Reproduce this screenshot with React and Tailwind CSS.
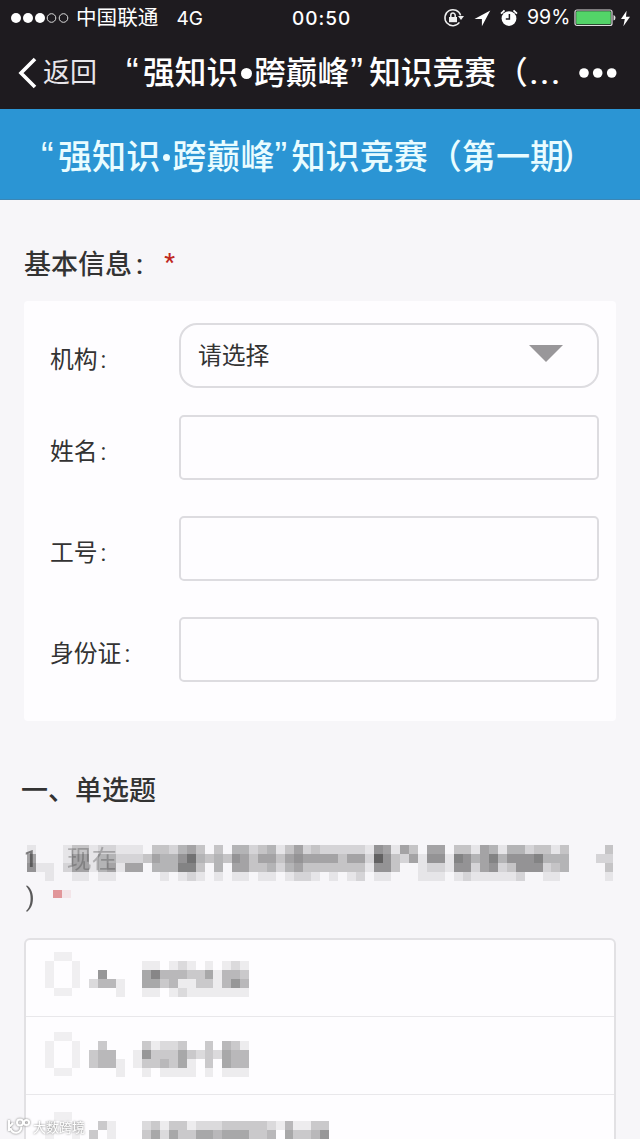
import React from 'react';
import clsx from 'clsx';

const CELL = 8.89;

// One string per column, top to bottom. 0 = empty, 9 = darkest block.
const QUESTION_COLUMNS = [
    '1560', '0010', '0011', '0000', '1120', '3551', '3551', '1110', '2441', '2451',
    '1210', '1250', '1250', '0300', '3540', '3441', '2440', '4671', '5872', '3431',
    '0300', '3441', '0300', '4651', '4551', '2330', '3531', '4541', '1320', '3541',
    '5652', '2532', '3531', '2530', '2531', '2330', '2531', '2532', '1210', '6961',
    '5661', '1330', '5200', '3500', '0111', '5621', '5621', '0110', '3761', '3662',
    '1421', '5551', '4761', '1421', '4631', '4662', '2660', '3760', '3421', '1431',
    '3440', '0000', '0000', '0000', '0200', '3231',
];

const RADIO_COLUMNS = ['01110', '10001', '10001', '01110'];

const OPTIONS = [
    {
        id: 'a',
        className: 'h-[77px] pt-[12px]',
        columns: [
            '0020', '0640', '0040', '0011', '0000', '0000', '1551', '1751', '0430',
            '1441', '2412', '1311', '0331', '1531', '0111', '1441', '2461', '1341',
        ],
    },
    {
        id: 'b',
        className: 'h-[78px] pt-[15px]',
        columns: [
            '0330', '3440', '0440', '0011', '0000', '0110', '3631', '1330', '2341',
            '2331', '3551', '0311', '0200', '3331', '0200', '4551', '3441', '1441',
        ],
    },
    {
        id: 'c',
        className: 'h-[78px] pt-[17px]',
        columns: [
            '03', '30', '11', '00', '00', '00', '23', '35', '12', '35', '33', '13', '25', '25',
            '24', '35', '35', '35', '33', '33', '24', '10', '45', '13', '13', '34', '36',
        ],
    },
];

const FIELDS = [
    { id: 'name', label: '姓名', className: 'mt-[27px]' },
    { id: 'job', label: '工号', className: 'mt-[36px]' },
    { id: 'idcard', label: '身份证', className: 'mt-[36px]' },
];

function Mosaic({ columns, color = '#222222', className = '' }) {
    const width = columns.length * CELL;
    const height = columns[0].length * CELL;

    return (
        <svg
            className={clsx('shrink-0', className)}
            width={width}
            height={height}
            viewBox={`0 0 ${width} ${height}`}
            shapeRendering="crispEdges"
            aria-hidden="true"
        >
            {columns.map((column, x) =>
                column.split('').map((level, y) =>
                    level === '0' ? null : (
                        <rect
                            key={`${x}-${y}`}
                            x={x * CELL}
                            y={y * CELL}
                            width={CELL}
                            height={CELL}
                            fill={color}
                            fillOpacity={Number(level) * 0.078}
                        />
                    )
                )
            )}
        </svg>
    );
}

function StatusBar() {
    return (
        <div className="flex h-9 items-center font-['Inter','Noto_Sans_CJK_SC',sans-serif] text-[19px] leading-none">
            <div className="flex w-[292px] items-center pl-[11px]">
                <svg width="60" height="12" viewBox="0 0 60 12" fill="#fff">
                    <circle cx="5" cy="6" r="5" />
                    <circle cx="17" cy="6" r="5" />
                    <circle cx="29" cy="6" r="5" />
                    <circle cx="40.5" cy="6" r="4.3" fill="none" stroke="#ddd" />
                    <circle cx="52.5" cy="6" r="4.3" fill="none" stroke="#ddd" />
                </svg>
                <span className="ml-[5px] text-[20.6px]">中国联通</span>
                <span className="ml-[18px]">4G</span>
            </div>
            <span className="w-[151px] font-medium tracking-[1px]">00:50</span>
            <svg width="22" height="20" viewBox="0 0 22 20" fill="none" stroke="#eee" strokeWidth="1.5">
                <path d="M16.4 14.4A8 8 0 1 1 17.6 7.4" />
                <path d="M15 8h6l-3 4z" fill="#eee" stroke="none" />
                <path d="M6 9h8v5.2H6z" fill="#eee" stroke="none" />
                <path d="M7.8 9V7.3a2.2 2.2 0 0 1 4.4 0V9" />
            </svg>
            <svg className="ml-[9px]" width="17" height="17" viewBox="0 0 17 17" fill="#fff">
                <path d="M16.3 0.6L0.5 8.9h7.4v7.4z" />
            </svg>
            <svg className="ml-[9px]" width="18" height="18" viewBox="0 0 18 18">
                <circle cx="9" cy="9.6" r="7.4" fill="#fff" />
                <path d="M1 4.6L4.5 1.3M17 4.6L13.5 1.3" stroke="#fff" strokeWidth="1.8" />
                <path d="M9.4 5v5H5.8" fill="none" stroke="#1e1b1f" strokeWidth="1.5" />
            </svg>
            <span className="ml-[9px] w-[47px] text-[19.5px]">99%</span>
            <svg width="42" height="18" viewBox="0 0 42 18">
                <rect x="1" y="1" width="37" height="15.5" rx="2" fill="none" stroke="#ddd" strokeWidth="1.2" />
                <rect x="2.2" y="2.3" width="34.6" height="13" rx="1" fill="#53d468" />
                <path d="M39.5 6q2 .4 2 2.8t-2 2.8z" fill="#ddd" />
            </svg>
            <svg className="ml-[4px]" width="11" height="17" viewBox="0 0 11 17" fill="#fff">
                <path d="M6.6 0.8L1 9h3.8l-1.4 7.2L10 6.8H6z" />
            </svg>
        </div>
    );
}

function NavBar() {
    return (
        <div className="flex h-[73px] items-center">
            <svg className="ml-[18px]" width="19" height="32" viewBox="0 0 19 32" fill="none" stroke="#fff" strokeWidth="3.6">
                <path d="M17 2L3 16l14 14" />
            </svg>
            <span className="ml-[6px] w-[80px] pt-[2px] text-[27px] leading-none text-[#e8e6ea]">返回</span>
            <div className="flex w-[456px] items-center pt-[2px] text-[31.7px] font-medium leading-none whitespace-nowrap">
                <span className="w-[20px] pb-[4px] pl-[3px] font-['Liberation_Sans'] text-[38px] font-normal">“</span>
                <span>强知识</span>
                <span className="mx-[2.5px] size-[11px] rounded-full bg-white" />
                <span>跨巅峰</span>
                <span className="w-[20px] pb-[4px] pl-[1px] font-['Liberation_Sans'] text-[38px] font-normal">”</span>
                <span>知识竞赛</span>
                <span>（</span>
                <span className="ml-[2px] tracking-[2px]">...</span>
            </div>
            <svg width="38" height="10" viewBox="0 0 38 10" fill="#fff">
                <circle cx="5" cy="5" r="4.8" />
                <circle cx="18.7" cy="5" r="4.8" />
                <circle cx="32.7" cy="5" r="4.8" />
            </svg>
        </div>
    );
}

function Watermark() {
    return (
        <div className="absolute bottom-[3px] left-[7px] flex items-center gap-[2px] [filter:drop-shadow(0_0_1px_#777)]">
            <svg width="24" height="18" viewBox="0 0 24 18" fill="none" stroke="#fff" strokeWidth="2">
                <path d="M2 2v11M2 9l4-4M3.5 10a5.4 5.4 0 0 0 10.8-1.4" />
                <circle cx="13" cy="4.5" r="3" />
                <circle cx="19.5" cy="4.5" r="2.6" />
            </svg>
            <span className="text-[13px] leading-none text-white">大数跨境</span>
        </div>
    );
}

export default function App() {
    return (
        <div className="relative h-[1139px] w-[640px] overflow-hidden bg-[#f7f6f9] font-['Roboto','Noto_Sans_CJK_SC',sans-serif] text-[#333]">
            <header className="h-[109px] bg-[#1e1b1f] text-white">
                <StatusBar />
                <NavBar />
            </header>

            <div className="flex h-[91px] items-center border-b border-[#3c86b4] bg-[#2b95d4] pt-[6px] pl-[41px] text-[34.1px] font-medium leading-none whitespace-nowrap text-[#e9fcff]">
                <span className="w-[17px] pb-[3px] font-['Liberation_Sans'] text-[38px] font-normal">“</span>
                <span>强知识</span>
                <span className="mx-[2.5px] size-[7px] rounded-full bg-[#e9fcff]" />
                <span>跨巅峰</span>
                <span className="w-[17px] pb-[3px] font-['Liberation_Sans'] text-[38px] font-normal">”</span>
                <span>知识竞赛（第一期</span>
                <span className="-ml-[3px]">）</span>
            </div>

            <main className="px-[24px]">
                <h2 className="flex h-[101px] items-center pt-[29px] text-[27px] font-medium leading-none">
                    基本信息
                    <span className="ml-[4px]">:</span>
                    <span className="ml-[21px] pb-[7px] text-[24px] text-[#c0281e]">*</span>
                </h2>

                <section className="h-[420px] rounded-[4px] bg-[#fefdff] pt-[22px] pr-[17px] pl-[26px] text-[23.8px] leading-none">
                    <div className="flex items-center">
                        <span className="w-[129px] pt-[10px]">
                            机构<span className="ml-[3px]">:</span>
                        </span>
                        <div className="flex h-[65px] flex-1 items-center justify-between rounded-[18px] border-2 border-[#dddce0] pr-[34px] pl-[17px]">
                            <span className="pt-[2px]">请选择</span>
                            <svg className="mb-[4px]" width="34" height="17" viewBox="0 0 34 17" fill="#99979a">
                                <path d="M0 0h34L17 17z" />
                            </svg>
                        </div>
                    </div>
                    {FIELDS.map((f) => (
                        <label key={f.id} className={clsx('flex items-center', f.className)}>
                            <span className="w-[129px] pt-[10px]">
                                {f.label}
                                <span className="ml-[3px]">:</span>
                            </span>
                            <input className="h-[65px] min-w-0 flex-1 rounded-[5px] border-2 border-[#dddce0]" />
                        </label>
                    ))}
                </section>

                <h2 className="-ml-[3px] mt-[56px] text-[27px] font-medium leading-[28px]">一、单选题</h2>

                {/* Question text, pixelated */}
                <div className="relative mt-[40px] ml-[2.7px] h-[93px]">
                    <Mosaic columns={QUESTION_COLUMNS} />
                    <Mosaic className="mt-[9px] ml-[26.7px]" color="#c8282d" columns={['6', '1']} />
                    <span className="absolute top-[2px] -left-[3px] text-[24px] leading-none font-medium opacity-60">1</span>
                    <span className="absolute top-[2px] left-[40px] text-[25px] leading-none opacity-30">现在</span>
                    <span className="absolute top-[39px] -left-[1px] text-[26px] leading-none opacity-80">)</span>
                </div>

                <section className="rounded-[6px] border-2 border-[#e2e1e4] bg-[#fefdff]">
                    {OPTIONS.map((o) => (
                        <div
                            key={o.id}
                            className={clsx('flex items-start border-b border-[#e9e8eb] pl-[18.5px]', o.className)}
                        >
                            <Mosaic className="opacity-80" columns={RADIO_COLUMNS} />
                            <Mosaic className="mt-[9px] ml-[8.9px]" columns={o.columns} />
                        </div>
                    ))}
                </section>
            </main>

            <Watermark />
        </div>
    );
}
